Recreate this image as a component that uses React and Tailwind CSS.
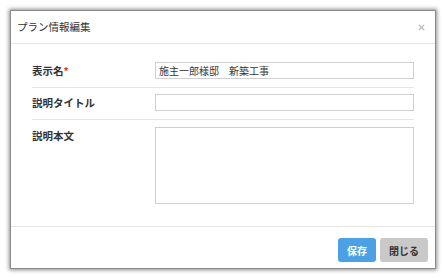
import { X } from "lucide-react";

const font = { fontFamily: '"Noto Sans CJK JP", "Noto Sans", sans-serif' };

function Row({ label, required, children, last, className = "" }) {
  return (
    <div className={`flex items-start ${last ? "" : "border-b border-[#e5e5e5]"} ${className}`}>
      <div className="w-[123px] shrink-0 text-[10.5px] font-bold leading-[17px] text-[#333]">
        {label}
        {required && <span className="text-[#e2332c]">*</span>}
      </div>
      {children}
    </div>
  );
}

export default function App() {
  return (
    <div className="h-[278px] w-[445px] bg-white pl-[10px] pt-[10px]" style={font}>
      <div className="flex h-[259px] w-[426px] flex-col border border-[#8a8a8a] bg-white shadow-[0_0_4px_1px_rgba(0,0,0,0.45)]">
        {/* header */}
        <div className="flex h-[33px] shrink-0 items-center justify-between border-b border-[#e5e5e5] pl-[6px] pr-[9px]">
          <span className="text-[10.5px] leading-none text-[#333]">プラン情報編集</span>
          <X size={9} strokeWidth={3.5} className="text-[#bdbdbd]" />
        </div>

        {/* body */}
        <div className="flex-1 px-[21px] pt-[18px]">
          <Row label="表示名" required className="pb-[8px]">
            <div className="flex h-[17px] flex-1 items-center border border-[#cfcfcf] pl-[3px] text-[10px] text-[#333]">
              施主一郎様邸　新築工事
            </div>
          </Row>
          <Row label="説明タイトル" className="pb-[8px] pt-[6px]">
            <div className="h-[17px] flex-1 border border-[#cfcfcf]" />
          </Row>
          <Row label="説明本文" last className="pt-[7px]">
            <div className="h-[77px] flex-1 border border-[#cfcfcf]" />
          </Row>
        </div>

        {/* footer */}
        <div className="flex h-[42px] shrink-0 items-start justify-end gap-[4px] border-t border-[#e5e5e5] pr-[7px] pt-[11px]">
          <button className="h-[24px] w-[38px] rounded-[3px] bg-[#4ca1e6] text-[10px] font-bold text-white">
            保存
          </button>
          <button className="h-[24px] w-[48px] rounded-[3px] bg-[#c9c9c9] text-[10px] font-bold text-[#333]">
            閉じる
          </button>
        </div>
      </div>
    </div>
  );
}
